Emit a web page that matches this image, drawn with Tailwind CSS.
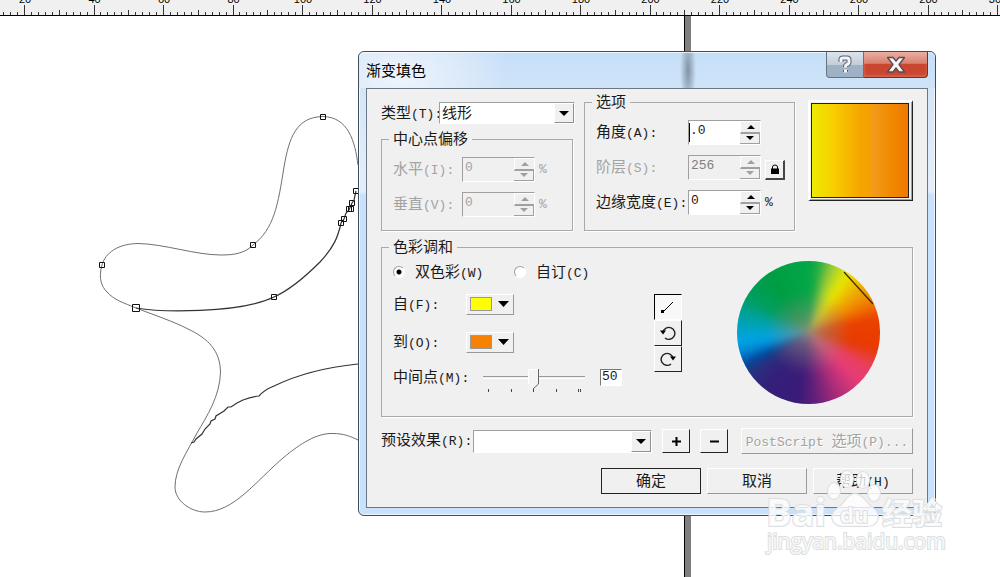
<!DOCTYPE html>
<html lang="zh-CN">
<head>
  <meta charset="UTF-8" />
  <meta name="viewport" content="width=device-width, initial-scale=1.0"/>
  <title>渐变填色</title>
  <script src="https://cdn.jsdelivr.net/npm/@tailwindcss/browser@4"></script>
</head>
<body class="bg-white">
  <div class="relative flex h-screen flex-col overflow-hidden font-['Liberation_Mono','Noto_Sans_CJK_SC',monospace] text-[13px] leading-[18px] text-[#1a1a1a]">

    <!-- Ruler -->
    <header class="h-4 shrink-0 border-b border-black bg-[#f0f0f0]">
      <svg id="ruler" class="block h-[15px] w-full font-['Liberation_Sans',sans-serif] text-[11px]" aria-hidden="true"></svg>
    </header>

    <!-- Canvas -->
    <main class="relative flex-1">
      <div class="absolute inset-y-0 left-[684px] w-[7px] border-l border-black bg-[#808080]"></div>
      <svg class="absolute top-0 left-0" width="360" height="561" viewBox="0 16 360 561" fill="none">
        <g stroke="#707070">
          <path d="M358 165C355 141 348 117 323 116.500C296 117 289 138 284 167C278 205 274 229 253 245C245 253 235 255 221 255C195 255 165 244 138 243.500C113 244 104 257 102 265C98 279 102 287 107 292C114 300 124 303 136 308"/>
          <path d="M136 308C154 315 175 322 188 329C209 339 220 351 220.500 372C220 396 207 416 197 433C187 452 175 469 175 487C175 501 191 512 205 512C234 512 256 481 283 458C301 443 317 433 333 433.500C343 433.500 350 436 358 440"/>
        </g>
        <g stroke="#333" stroke-width="1.200">
          <path d="M136 308C160 312 238 314 274 297C292 289 309 273 320 262C334 247 338 237 341 223L344 219L346 213L349 210L352 203L354 200L356 191"/>
          <path d="M191 443l3-1 2-3 6-5 3-5 5-5 1-3 4-2 1-3 8-5 4-4h3l6-4 6-3q8-3 16-4q5-6 15-10q35-17 84-22"/>
        </g>
        <g stroke="#111">
          <path d="M320.500 114.500h5v5h-5zM250.500 242.500h5v5h-5zM99.500 262.500h5v5h-5zM271.500 294.500h5v5h-5zM132.500 304.500h7v7h-7zM353.500 188.500h5v5h-5zM349.500 200.500h5v5h-5zM348.500 206.500h5v5h-5zM346.500 206.500h5v5h-5zM341.500 216.500h5v5h-5zM338.500 220.500h5v5h-5z"/>
        </g>
      </svg>
    </main>

    <!-- Dialog -->
    <section role="dialog" aria-labelledby="dlgTitle" class="absolute top-[51px] left-[358px] w-[578px] rounded-md border border-[#3f4d5a] bg-linear-to-b from-[#cfe3f8] from-0% via-[#e4eefa] via-30% to-[#c8e1fc] to-31% px-[7px] pb-[7px] shadow-[inset_0_0_0_1px_#ffffffb0]">
      <div class="-mx-[7px] flex h-9 justify-between rounded-t-md bg-[radial-gradient(ellipse_110px_70px_at_40px_24px,#eef4fc_0,#e2edfab0_60%,transparent_100%),radial-gradient(ellipse_8px_40px_at_329px_18px,#8193a5_0,transparent_100%),linear-gradient(#c5dff9,#cfe3f8)] pr-[7px] pl-[7px] shadow-[inset_0_1px_0_#ffffffb0]">
        <h1 id="dlgTitle" class="self-center font-['Noto_Sans_CJK_SC',sans-serif] text-[15px] text-black">渐变填色</h1>
        <div class="flex h-[26px]">
          <button type="button" aria-label="帮助" class="flex w-[38px] items-center justify-center rounded-bl border border-t-0 border-[#66727e] bg-linear-to-b from-[#dbe4ec] from-0% via-[#c3ced9] via-50% to-[#9fb2c5] to-51%">
            <svg width="16" height="20" viewBox="0 0 16 20" fill="none">
              <path d="M4 7V4.500Q4 3 6 3H10Q12 3 12 5V7Q12 9 10 9.500Q8.500 10 8.500 11.500V12M8.500 15V17" stroke="#5b6470" stroke-width="5"/>
              <path d="M4 7V4.500Q4 3 6 3H10Q12 3 12 5V7Q12 9 10 9.500Q8.500 10 8.500 11.500V12.500M8.500 14.500V17.500" stroke="#f4f4f4" stroke-width="3"/>
            </svg>
          </button>
          <button type="button" aria-label="关闭" class="flex w-16 items-center justify-center rounded-br border border-t-0 border-l-0 border-[#6b3030] bg-linear-to-b from-[#eab0a4] from-0% via-[#d98070] via-45% to-[#cb4630] to-50% shadow-[inset_0_-1px_3px_#f0a08080]">
            <svg width="20" height="18" viewBox="0 0 20 18">
              <path d="M1.500 1.500H7L10 5 13 1.500H18.500L13 8.500 18.500 16H13L10 12 7 16H1.500L7 8.500Z" fill="#f4f4f4" stroke="#5c4a50" stroke-width="1.300" stroke-linejoin="round"/>
            </svg>
          </button>
        </div>
      </div>

      <form class="border border-[#6d7884] bg-[#f0f0f0] pt-1 pr-3.5 pb-[13px] pl-3.5" onsubmit="event.preventDefault()">
        <div class="flex gap-[9px]">
          <!-- Type and center offset -->
          <div class="w-[194px] pt-[9px]">
            <div class="flex h-[22px] items-center">
              <label for="type" class="w-[58px] pt-[3px] whitespace-nowrap"><span class="text-[15px]">类型</span>(T):</label>
              <div class="relative h-full flex-1 border border-t-[#a0a0a0] border-l-[#a0a0a0] border-r-white border-b-white bg-white">
                <select id="type" class="h-full w-full appearance-none pt-[3px] pl-0.5 text-[15px]">
                  <option>线形</option>
                </select>
                <span class="pointer-events-none absolute inset-y-0 right-0 flex w-5 items-center justify-center border border-t-white border-l-white border-r-[#909090] border-b-[#909090] bg-[#f0f0f0]">
                  <svg width="10" height="5" viewBox="0 0 10 5"><path d="M0 0H10L5 5Z"/></svg>
                </span>
              </div>
            </div>
            <fieldset class="mt-1.5 mr-0.5 border border-[#a9a9a9] px-[11px] pt-[9px] pb-[13px] text-[#a3a3a3] shadow-[1px_1px_0_#fff]" disabled>
              <legend class="-ml-1 h-[18px] px-1 text-[15px] leading-[22px] text-[#1a1a1a]">中心点偏移</legend>
              <div class="flex h-[25px] items-center">
                <label for="horizontal" class="w-[69px] pt-[3px]"><span class="text-[15px]">水平</span>(I):</label>
                <div class="flex h-full w-[73px] border border-t-[#a0a0a0] border-l-[#a0a0a0] border-r-white border-b-white">
                  <input id="horizontal" type="text" value="0" class="w-0 flex-1 pb-1 pl-0.5" />
                  <div class="flex w-5 flex-col">
                    <button type="button" aria-label="增加" class="flex flex-1 items-center justify-center border-t border-l border-white border-b-2 border-b-[#a0a0a0]"><svg width="8" height="4"><path d="M0 4H8L4 0Z" fill="#a0a0a0"/></svg></button>
                    <button type="button" aria-label="减少" class="flex flex-1 items-center justify-center border-r border-b border-[#a0a0a0]"><svg width="8" height="4"><path d="M0 0H8L4 4Z" fill="#a0a0a0"/></svg></button>
                  </div>
                </div>
                <span class="ml-1">%</span>
              </div>
              <div class="mt-2.5 flex h-[25px] items-center">
                <label for="vertical" class="w-[69px] pt-[3px]"><span class="text-[15px]">垂直</span>(V):</label>
                <div class="flex h-full w-[73px] border border-t-[#a0a0a0] border-l-[#a0a0a0] border-r-white border-b-white">
                  <input id="vertical" type="text" value="0" class="w-0 flex-1 pb-1 pl-0.5" />
                  <div class="flex w-5 flex-col">
                    <button type="button" aria-label="增加" class="flex flex-1 items-center justify-center border-t border-l border-white border-b-2 border-b-[#a0a0a0]"><svg width="8" height="4"><path d="M0 4H8L4 0Z" fill="#a0a0a0"/></svg></button>
                    <button type="button" aria-label="减少" class="flex flex-1 items-center justify-center border-r border-b border-[#a0a0a0]"><svg width="8" height="4"><path d="M0 0H8L4 4Z" fill="#a0a0a0"/></svg></button>
                  </div>
                </div>
                <span class="ml-1">%</span>
              </div>
            </fieldset>
          </div>

          <!-- Options -->
          <fieldset class="flex-1 border border-[#a9a9a9] pt-[9px] pb-3.5 pl-[11px] shadow-[1px_1px_0_#fff]">
            <legend class="-ml-1 h-[18px] px-1 text-[15px] leading-[22px]">选项</legend>
            <div class="flex h-[25px] items-center">
              <label for="angle" class="w-[92px] pt-[3px]"><span class="text-[15px]">角度</span>(A):</label>
              <div class="flex h-full w-[73px] border border-t-[#a0a0a0] border-l-[#a0a0a0] border-r-white border-b-white bg-white">
                <input id="angle" type="text" value=".0" class="my-0.5 w-0 flex-1 border-l border-black pb-1" />
                <div class="flex w-5 flex-col bg-[#f0f0f0]">
                  <button type="button" aria-label="增加" class="flex flex-1 items-center justify-center border-t border-l border-white border-b-2 border-b-[#a0a0a0]"><svg width="8" height="4"><path d="M0 4H8L4 0Z"/></svg></button>
                  <button type="button" aria-label="减少" class="flex flex-1 items-center justify-center border-r border-b border-[#a0a0a0]"><svg width="8" height="4"><path d="M0 0H8L4 4Z"/></svg></button>
                </div>
              </div>
            </div>
            <div class="mt-2.5 flex h-[25px] items-center text-[#a3a3a3]">
              <label for="steps" class="w-[92px] pt-[3px]"><span class="text-[15px]">阶层</span>(S):</label>
              <div class="flex h-full w-[73px] border border-t-[#a0a0a0] border-l-[#a0a0a0] border-r-white border-b-white">
                <input id="steps" type="text" value="256" disabled class="w-0 flex-1 pb-1 pl-0.5 text-[#808080]" />
                <div class="flex w-5 flex-col">
                  <button type="button" disabled aria-label="增加" class="flex flex-1 items-center justify-center border-t border-l border-white border-b-2 border-b-[#a0a0a0]"><svg width="8" height="4"><path d="M0 4H8L4 0Z" fill="#a0a0a0"/></svg></button>
                  <button type="button" disabled aria-label="减少" class="flex flex-1 items-center justify-center border-r border-b border-[#a0a0a0]"><svg width="8" height="4"><path d="M0 0H8L4 4Z" fill="#a0a0a0"/></svg></button>
                </div>
              </div>
              <button type="button" aria-label="锁定" class="mt-1 ml-1 flex size-5 items-center justify-center border-t border-r-2 border-b-2 border-l border-t-white border-r-[#444] border-b-[#444] border-l-white">
                <svg width="8" height="10" viewBox="0 0 8 10"><path d="M1.500 5V3Q1.500 1 4 1T6.500 3V5" fill="none" stroke="#000"/><path d="M0 4.500H8V10H0Z"/></svg>
              </button>
            </div>
            <div class="mt-2.5 flex h-[25px] items-center">
              <label for="edge" class="w-[92px] pt-[3px] whitespace-nowrap"><span class="text-[15px]">边缘宽度</span>(E):</label>
              <div class="flex h-full w-[73px] border border-t-[#a0a0a0] border-l-[#a0a0a0] border-r-white border-b-white bg-white">
                <input id="edge" type="text" value="0" class="w-0 flex-1 pb-1 pl-0.5" />
                <div class="flex w-5 flex-col bg-[#f0f0f0]">
                  <button type="button" aria-label="增加" class="flex flex-1 items-center justify-center border-t border-l border-white border-b-2 border-b-[#a0a0a0]"><svg width="8" height="4"><path d="M0 4H8L4 0Z"/></svg></button>
                  <button type="button" aria-label="减少" class="flex flex-1 items-center justify-center border-r border-b border-[#a0a0a0]"><svg width="8" height="4"><path d="M0 0H8L4 4Z"/></svg></button>
                </div>
              </div>
              <span class="ml-1">%</span>
            </div>
          </fieldset>

          <!-- Preview -->
          <div class="mt-[7px] ml-1 h-[101px] w-[105px] border-t-2 border-r border-b border-l-2 border-t-white border-r-[#222] border-b-[#222] border-l-white p-px pr-[3px] pb-0.5 shadow-[inset_-1px_-1px_0_#a0a0a0]">
            <div class="h-full border border-[#222] bg-[linear-gradient(to_right,#ebeb00,#f8cf00_22%,#f5a500_50%,#f5a200_60%,#f39a1c_63%,#f08a00_82%,#f07800)]"></div>
          </div>
        </div>

        <!-- Color blend -->
        <fieldset class="mt-[7px] border border-[#a9a9a9] pb-3 pl-[11px] shadow-[1px_1px_0_#fff]">
          <legend class="-ml-1 h-[18px] px-1 text-[15px] leading-[22px]">色彩调和</legend>
          <div class="flex">
            <div class="w-[261px]">
              <div class="flex h-8 items-center">
                <label class="flex w-[121px] items-center gap-2.5">
                  <input type="radio" name="blend" checked class="size-3 appearance-none rounded-full border border-t-[#a0a0a0] border-r-white border-b-white border-l-[#a0a0a0] bg-[radial-gradient(#000_0_2px,#fff_3px)]" />
                  <span class="pt-[3px]"><span class="text-[15px]">双色彩</span>(W)</span>
                </label>
                <label class="flex items-center gap-2.5">
                  <input type="radio" name="blend" class="size-3 appearance-none rounded-full border border-t-[#a0a0a0] border-r-white border-b-white border-l-[#a0a0a0] bg-white" />
                  <span class="pt-[3px]"><span class="text-[15px]">自订</span>(C)</span>
                </label>
              </div>
              <div class="flex h-8 items-center">
                <label for="fromColor" class="w-[73px] pt-[3px]"><span class="text-[15px]">自</span>(F):</label>
                <button id="fromColor" type="button" class="flex h-[21px] w-12 items-center gap-1.5 border border-t-white border-r-[#999] border-b-[#999] border-l-white pl-[3px]">
                  <span class="h-3.5 w-[22px] border border-[#999] bg-[#ffff00]"></span>
                  <svg width="11" height="6"><path d="M0 0H11L5.500 6Z"/></svg>
                </button>
              </div>
              <div class="flex h-11 items-center">
                <label for="toColor" class="w-[73px] pt-[3px]"><span class="text-[15px]">到</span>(O):</label>
                <button id="toColor" type="button" class="flex h-[21px] w-12 items-center gap-1.5 border border-t-white border-r-[#999] border-b-[#999] border-l-white pl-[3px]">
                  <span class="h-3.5 w-[22px] border border-[#999] bg-[#f58200]"></span>
                  <svg width="11" height="6"><path d="M0 0H11L5.500 6Z"/></svg>
                </button>
              </div>
              <div class="flex h-[26px] items-center">
                <label for="midpoint" class="w-[90px] pt-[3px] whitespace-nowrap"><span class="text-[15px]">中间点</span>(M):</label>
                <div class="relative flex w-[102px]">
                  <input id="midpoint" type="range" min="0" max="100" value="50" class="h-[22px] w-full appearance-none bg-transparent [&::-webkit-slider-runnable-track]:h-[3px] [&::-webkit-slider-runnable-track]:border-t [&::-webkit-slider-runnable-track]:border-b [&::-webkit-slider-runnable-track]:border-t-[#999] [&::-webkit-slider-runnable-track]:border-b-white [&::-webkit-slider-thumb]:-mt-2 [&::-webkit-slider-thumb]:h-[21px] [&::-webkit-slider-thumb]:w-3 [&::-webkit-slider-thumb]:appearance-none [&::-webkit-slider-thumb]:bg-[url('data:image/svg+xml,%3Csvg%20xmlns=%22http://www.w3.org/2000/svg%22%20width=%2212%22%20height=%2221%22%3E%3Cpath%20d=%22M0%200H11V15L5%2020L0%2015Z%22%20fill=%22%23f3f3f3%22/%3E%3Cpath%20d=%22M.5%2015V.5H11%22%20fill=%22none%22%20stroke=%22white%22/%3E%3Cpath%20d=%22M10.500%200V15L5%2020%22%20fill=%22none%22%20stroke=%22%23666%22/%3E%3C/svg%3E')]" />
                  <svg class="pointer-events-none absolute top-[23px] left-0" width="102" height="3"><path d="M5.500 0V3M28.500 0V3M50.500 0V3M73.500 0V3M95.500 0V3M97.500 0V3" stroke="#444"/></svg>
                </div>
                <input type="text" value="50" aria-label="中间点数值" class="ml-[15px] h-[17px] w-[22px] border border-t-[#777] border-r-white border-b-white border-l-[#777] bg-white pl-px" />
              </div>
            </div>

            <!-- Blend direction -->
            <div class="mt-[38px] flex w-7 flex-col">
              <button type="button" aria-label="直线" class="flex h-[26px] items-center justify-center border-t border-r border-b border-l border-t-black border-r-white border-b-white border-l-black bg-[#f8f8f8]">
                <svg width="16" height="16" viewBox="0 0 16 16"><path d="M3 13L13 3" stroke="#000"/><path d="M1 11h3v3H1z"/></svg>
              </button>
              <button type="button" aria-label="逆时针" class="flex h-[26px] items-center justify-center border-t border-r border-b border-l border-t-white border-r-[#222] border-b-[#222] border-l-white">
                <svg width="16" height="16" viewBox="0 0 16 16"><path d="M3 7A6 6 0 1 1 5 13" fill="none" stroke="#222" stroke-width="1.400"/><path d="M0 5.500H6L3 9.500Z"/></svg>
              </button>
              <button type="button" aria-label="顺时针" class="flex h-[26px] items-center justify-center border-t border-r border-b border-l border-t-white border-r-[#222] border-b-[#222] border-l-white">
                <svg width="16" height="16" viewBox="0 0 16 16"><path d="M13 7A6 6 0 1 0 11 13" fill="none" stroke="#222" stroke-width="1.400"/><path d="M10 5.500H16L13 9.500Z"/></svg>
              </button>
            </div>

            <!-- Color wheel -->
            <div class="relative mt-[5px] ml-[55px] size-[143px] overflow-hidden rounded-full">
              <div class="absolute -inset-3 rounded-full bg-[radial-gradient(circle,#958c80e0_0,#958c8080_12%,transparent_36%),conic-gradient(#00a747_0deg,#20ab43_8deg,#9dcc38_20deg,#e8e800_33deg,#efad00_49deg,#ef7d00_64deg,#ea4100_78deg,#e83a00_103deg,#e84060_120deg,#e63b78_135deg,#a82c78_156deg,#67207a_173deg,#3b1a78_188deg,#33207a_220deg,#29307f_235deg,#00489a_244deg,#0089d7_254deg,#00a4e5_263deg,#00a1a0_285deg,#009e60_300deg,#009d42_325deg,#00a747_360deg)] blur-[3px]"></div>
              <svg class="absolute inset-0" width="143" height="143"><path d="M107 11L136 43" stroke="#3a2800" stroke-width="1.200"/></svg>
            </div>
          </div>
        </fieldset>

        <!-- Presets -->
        <div class="mt-[11px] flex h-[26px] items-center">
          <label for="preset" class="w-[92px] pt-px whitespace-nowrap"><span class="text-[15px]">预设效果</span>(R):</label>
          <div class="relative h-[23px] w-[179px] border border-t-[#a0a0a0] border-l-[#a0a0a0] border-r-white border-b-white bg-white">
            <select id="preset" class="h-full w-full appearance-none pl-0.5 text-[15px]">
              <option></option>
            </select>
            <span class="pointer-events-none absolute inset-y-0 right-0 flex w-5 items-center justify-center border border-t-white border-l-white border-r-[#909090] border-b-[#909090] bg-[#f0f0f0]">
              <svg width="10" height="5" viewBox="0 0 10 5"><path d="M0 0H10L5 5Z"/></svg>
            </span>
          </div>
          <button type="button" aria-label="添加" class="ml-2.5 flex h-6 w-7 items-center justify-center border border-t-white border-r-[#222] border-b-[#222] border-l-white">
            <svg width="9" height="9"><path d="M4.500 0V9M0 4.500H9" stroke="#000" stroke-width="2"/></svg>
          </button>
          <button type="button" aria-label="删除" class="ml-2.5 flex h-6 w-7 items-center justify-center border border-t-white border-r-[#222] border-b-[#222] border-l-white">
            <svg width="9" height="9"><path d="M0 4.500H9" stroke="#000" stroke-width="2"/></svg>
          </button>
          <button type="button" disabled class="ml-[13px] h-[26px] flex-1 border border-t-white border-r-[#999] border-b-[#999] border-l-white pt-[3px] whitespace-nowrap text-[#a3a3a3] [text-shadow:1px_1px_0_#fff]">PostScript <span class="text-[15px]">选项</span>(P)...</button>
        </div>

        <!-- Actions -->
        <div class="mt-3.5 flex justify-end gap-1.5">
          <button type="submit" class="h-[26px] w-[100px] border border-[#222] pt-[3px] text-[15px]">确定</button>
          <button type="button" class="h-[26px] w-[100px] border border-t-white border-r-[#999] border-b-[#999] border-l-white pt-[3px] text-[15px]">取消</button>
          <button type="button" class="h-[26px] w-[100px] border border-t-white border-r-[#999] border-b-[#999] border-l-white pt-[3px]"><span class="text-[15px]">帮助</span>(H)</button>
        </div>
      </form>
    </section>

    <!-- Watermark -->
    <svg class="pointer-events-none absolute top-[466px] left-[762px]" width="190" height="92" viewBox="762 466 190 92" fill="#ffffffc8" stroke="#dcdfe2" paint-order="stroke">
      <g stroke-width="2">
        <ellipse cx="834" cy="491" rx="6" ry="8"/>
        <ellipse cx="847" cy="479" rx="6" ry="8"/>
        <ellipse cx="863" cy="480" rx="6" ry="8"/>
        <ellipse cx="874" cy="493" rx="6" ry="8"/>
        <path d="M855 494C847 494 845 504 838 508C828 515 832 526 843 526H867C879 526 881 514 873 508C866 504 863 494 855 494Z"/>
      </g>
      <g stroke-width="2">
        <text x="766" y="526" class="font-['Open_Sans',sans-serif] text-[38px] font-bold">Bai</text>
        <text x="840" y="523" class="font-['Open_Sans',sans-serif] text-[22px] font-bold">du</text>
        <text x="882" y="524" class="font-['Noto_Sans_CJK_SC',sans-serif] text-[30px] font-bold">经验</text>
        <text x="767" y="549" class="font-['Open_Sans',sans-serif] text-[21px]">jingyan.baidu.com</text>
      </g>
    </svg>
  </div>

  <script>
    // Ruler ticks: a label every 20 units, a medium tick every 10
    const ns = 'http://www.w3.org/2000/svg';
    const ruler = document.getElementById('ruler');
    const step = 69.5;
    let d = '';
    for (let i = -3; i < 160; i++) {
      const x = Math.round(24 + i * step / 10) + 0.5;
      const top = i % 10 === 0 ? 5 : i % 5 === 0 ? 10 : 12;
      d += `M${x} ${top}V15`;
    }
    const ticks = document.createElementNS(ns, 'path');
    ticks.setAttribute('d', d);
    ticks.setAttribute('stroke', '#333');
    ruler.appendChild(ticks);
    for (let n = 0; n < 15; n++) {
      const label = document.createElementNS(ns, 'text');
      label.setAttribute('x', 25 + n * step);
      label.setAttribute('y', 3);
      label.setAttribute('text-anchor', 'middle');
      label.textContent = (n + 1) * 20;
      ruler.appendChild(label);
    }
  </script>
</body>
</html>
